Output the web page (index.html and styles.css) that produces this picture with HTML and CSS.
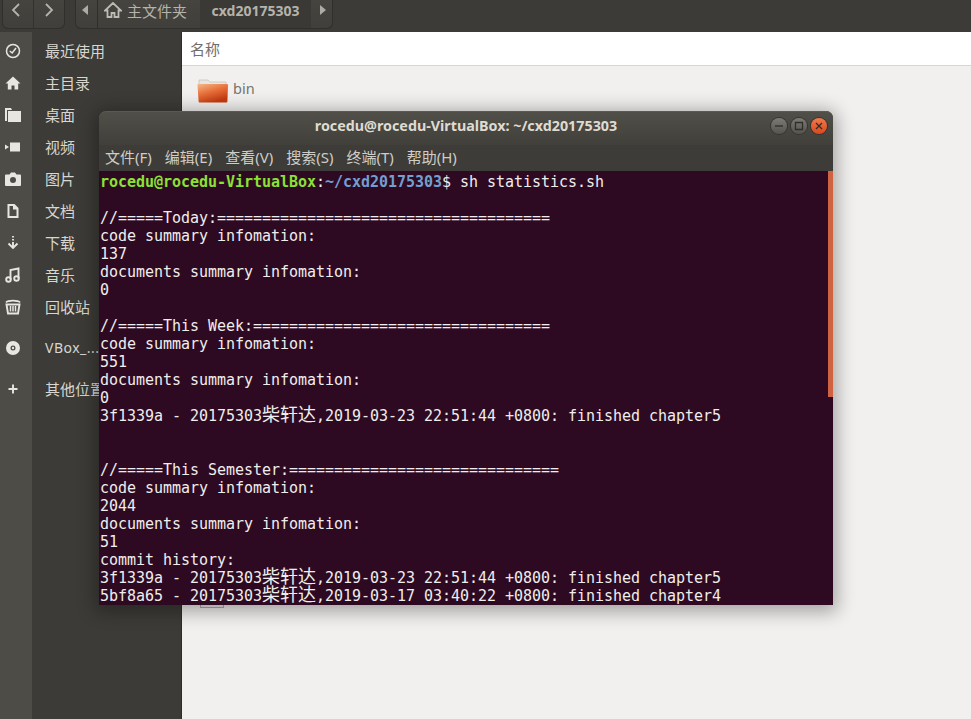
FILE: index.html
```html
<!DOCTYPE html>
<html lang="zh">
<head>
<meta charset="utf-8">
<title>cxd20175303</title>
<link rel="stylesheet" href="styles.css">
</head>
<body>
<div class="desktop">
  <header class="toolbar">
    <div class="btn-group nav">
      <div class="nav-btn"><svg width="12" height="16" viewBox="0 0 12 16"><path d="M9 2 3 8l6 6" class="chev"/></svg></div>
      <div class="nav-btn last"><svg width="12" height="16" viewBox="0 0 12 16"><path d="m3 2 6 6-6 6" class="chev"/></svg></div>
    </div>
    <div class="btn-group path">
      <div class="arrow-cell first"><svg width="8" height="12" viewBox="0 0 8 12"><path d="M7 1v10L1 6z" class="tri"/></svg></div>
      <div class="crumb home">
        <svg width="18" height="16" viewBox="0 0 18 16"><path d="M9 1 1 8.500h2.500V15h4v-4h3v4h4V8.500H17z" class="home-line"/></svg>
        <span>主文件夹</span>
      </div>
      <div class="crumb current">cxd20175303</div>
      <div class="arrow-cell end"><svg width="8" height="12" viewBox="0 0 8 12"><path d="M1 1v10l6-5z" class="tri"/></svg></div>
    </div>
    <div class="toolbar-fill"></div>
  </header>

  <div class="body-row">
    <nav class="places">
      <div class="place"><span class="rail"><svg width="16" height="16" viewBox="0 0 16 16"><circle cx="8" cy="8" r="6.500" class="stroke"/><path d="m4.800 8 2.400 2 3.800-5" class="stroke"/></svg></span><span class="label">最近使用</span></div>
      <div class="place"><span class="rail"><svg width="16" height="16" viewBox="0 0 16 16"><path d="M8 1.500 .5 8.500h2.300V14.500h3.700v-4h3v4h3.700V8.500h2.300z" class="fill"/></svg></span><span class="label">主目录</span></div>
      <div class="place"><span class="rail"><svg width="16" height="16" viewBox="0 0 16 16"><path d="M0 1h6l1 2h-5v11H0z" class="fill"/><path d="M3 4h13v11H3z" class="fill"/></svg></span><span class="label">桌面</span></div>
      <div class="place"><span class="rail"><svg width="16" height="16" viewBox="0 0 16 16"><path d="M5 3.500h10v9H5z" class="fill"/><path d="M0 5.500 4 8 0 10.500z" class="fill"/></svg></span><span class="label">视频</span></div>
      <div class="place"><span class="rail"><svg width="16" height="16" viewBox="0 0 16 16"><path fill-rule="evenodd" d="M1 3.500h3.500L6 1.500h4l1.500 2H15a1 1 0 0 1 1 1V14a1 1 0 0 1-1 1H1a1 1 0 0 1-1-1V4.500a1 1 0 0 1 1-1ZM8 6a3 3 0 1 0 0 6 3 3 0 0 0 0-6Z" class="fill"/></svg></span><span class="label">图片</span></div>
      <div class="place"><span class="rail"><svg width="16" height="16" viewBox="0 0 16 16"><path fill-rule="evenodd" d="M2.500 1h7l4 4v10h-11Zm2 2v10h7V6.500h-3.500V3Z" class="fill"/></svg></span><span class="label">文档</span></div>
      <div class="place"><span class="rail"><svg width="16" height="16" viewBox="0 0 16 16"><path d="M8 1v1.500M8 4v1.500M8 7v5M3.500 8.500 8 13l4.500-4.500" class="stroke thick"/></svg></span><span class="label">下载</span></div>
      <div class="place"><span class="rail"><svg width="16" height="16" viewBox="0 0 16 16"><path d="M5.500 12.500V3l8-1.500v10" class="stroke thick"/><circle cx="3.500" cy="12.500" r="2.300" class="stroke thick"/><circle cx="11.500" cy="11.500" r="2.300" class="stroke thick"/></svg></span><span class="label">音乐</span></div>
      <div class="place"><span class="rail"><svg width="16" height="16" viewBox="0 0 16 16"><path d="M1 3.500C3 1 13 1 15 3.500" class="stroke thick"/><path d="M1.500 5.500h13L13 14.500H3z" class="stroke thick"/><path d="M5.500 7v5.500M8 7v5.500M10.500 7v5.500" class="stroke"/></svg></span><span class="label">回收站</span></div>
      <div class="place device"><span class="rail"><svg width="16" height="16" viewBox="0 0 16 16"><path fill-rule="evenodd" d="M8 1a7 7 0 1 0 0 14A7 7 0 0 0 8 1Zm0 4.500a2.500 2.500 0 1 1 0 5 2.500 2.500 0 0 1 0-5Z" class="fill"/><circle cx="8" cy="8" r="1.200" class="fill"/></svg></span><span class="label latin">VBox_...</span></div>
      <div class="place other"><span class="rail"><svg width="16" height="16" viewBox="0 0 16 16"><path d="M8 3.500v9M3.500 8h9" class="stroke thick"/></svg></span><span class="label">其他位置</span></div>
      <div class="rail-fill"></div>
    </nav>

    <main class="files">
      <div class="col-header">名称</div>
      <div class="file-row">
        <svg width="32" height="26" viewBox="0 0 32 26">
          <defs>
            <linearGradient id="fold" x1="0" y1="0" x2="0.500" y2="1"><stop offset="0" stop-color="#f3b98a"/><stop offset=".5" stop-color="#e8703a"/><stop offset="1" stop-color="#c43a10"/></linearGradient>
          </defs>
          <path d="M2 2h9l2 2h16v4H2z" fill="#e9e6e2" stroke="#bdb7b0" stroke-width=".6"/>
          <path d="M1 6h29a1 1 0 0 1 1 1l-.6 16.500a1 1 0 0 1-1 1H2.600a1 1 0 0 1-1-1L.5 7a1 1 0 0 1 .5-1Z" fill="url(#fold)"/>
        </svg>
        <span class="file-name">bin</span>
      </div>
      <div class="hidden-file"></div>
    </main>
  </div>

  <section class="terminal">
    <div class="term-title">
      <span class="term-name">rocedu@rocedu-VirtualBox: ~/cxd20175303</span>
      <div class="win-btns">
        <span class="win-btn"><svg width="10" height="10" viewBox="0 0 10 10"><path d="M1 5h8" class="glyph"/></svg></span>
        <span class="win-btn"><svg width="10" height="10" viewBox="0 0 10 10"><path d="M1.500 1.500h7v7h-7z" class="glyph"/></svg></span>
        <span class="win-btn close"><svg width="10" height="10" viewBox="0 0 10 10"><path d="m2 2 6 6M8 2 2 8" class="glyph dark"/></svg></span>
      </div>
    </div>
    <div class="term-menu">
      <span>文件(F)</span><span>编辑(E)</span><span>查看(V)</span><span>搜索(S)</span><span>终端(T)</span><span>帮助(H)</span>
    </div>
    <div class="term-body">
      <pre class="term-text"><b class="user">rocedu@rocedu-VirtualBox</b>:<b class="cwd">~/cxd20175303</b>$ sh statistics.sh

//=====Today:=====================================
code summary infomation:
137
documents summary infomation:
0

//=====This Week:=================================
code summary infomation:
551
documents summary infomation:
0
3f1339a - 20175303<span class="cjk">柴轩达</span>,2019-03-23 22:51:44 +0800: finished chapter5


//=====This Semester:==============================
code summary infomation:
2044
documents summary infomation:
51
commit history:
3f1339a - 20175303<span class="cjk">柴轩达</span>,2019-03-23 22:51:44 +0800: finished chapter5
5bf8a65 - 20175303<span class="cjk">柴轩达</span>,2019-03-17 03:40:22 +0800: finished chapter4</pre>
      <div class="scroll-thumb"></div>
    </div>
  </section>
</div>
</body>
</html>
```

FILE: styles.css
```css
* { box-sizing: border-box; }
html, body { margin: 0; padding: 0; }
body { width: 971px; height: 719px; overflow: hidden; background: #f1f0ee; }
.desktop {
  position: relative;
  width: 971px;
  height: 719px;
  display: flex;
  flex-direction: column;
  font-family: "Noto Sans", "Noto Sans CJK SC", sans-serif;
  overflow: hidden;
}

/* toolbar */
.toolbar {
  height: 32px;
  flex: none;
  display: flex;
  gap: 10px;
  padding-left: 2px;
  background: #3c3b37;
  align-items: flex-start;
}
.btn-group {
  height: 29px;
  display: flex;
  border: 1px solid #302f2c;
  border-top: 0;
  border-radius: 0 0 6px 6px;
  background: linear-gradient(#45443f, #413f3b);
  overflow: hidden;
}
.nav { width: 63px; }
.nav-btn { width: 31px; display: flex; align-items: center; justify-content: center; padding: 0 3px 9px 0; border-right: 1px solid #33322f; }
.nav-btn.last { border-right: 0; padding-right: 0; }
.chev { fill: none; stroke: #b5b3ab; stroke-width: 1.800; }
.path { width: 258px; }
.arrow-cell { display: flex; align-items: center; justify-content: center; padding-bottom: 9px; }
.arrow-cell.first { width: 22px; padding-right: 4px; border-right: 1px solid #2f2e2b; }
.arrow-cell.end { flex: 1; padding-left: 2px; }
.tri { fill: #aeaca4; }
.crumb { display: flex; align-items: center; padding-bottom: 8px; font-size: 15px; color: #b5b3ab; }
.crumb.home { width: 102px; gap: 5px; padding-left: 6px; }
.home-line { fill: none; stroke: #bdbbb3; stroke-width: 1.800; }
.crumb.current { width: 111px; justify-content: center; font-weight: 700; font-size: 14px; background: #3a3935; color: #b5b3ab; }
.toolbar-fill { flex: 1; }

/* body */
.body-row { flex: 1; display: flex; min-height: 0; }
.places {
  width: 182px;
  flex: none;
  padding-top: 4px;
  display: flex;
  flex-direction: column;
  background: linear-gradient(to right, #4d4c47 0, #4d4c47 32px, #3c3b37 32px, #3c3b37 181px, #2e2d2a 181px);
}
.place { height: 32px; flex: none; display: flex; align-items: center; color: #d8d6cf; margin-top: -2px; margin-bottom: 2px; }
.rail { width: 32px; flex: none; display: flex; align-items: center; justify-content: center; padding: 2px 6px 0 0; }
.label { margin-left: 13px; font-size: 15px; white-space: nowrap; }
.label.latin { font-size: 14px; letter-spacing: .5px; }
.place.device { margin-top: 7px; }
.place.other { margin-top: 7px; }
.rail-fill { flex: 1; }
.fill { fill: #e8e6e0; }
.stroke { fill: none; stroke: #e8e6e0; stroke-width: 1.500; }
.stroke.thick { stroke-width: 1.900; }

/* files */
.files { flex: 1; display: flex; flex-direction: column; background: #f1f0ee; position: relative; }
.col-header {
  height: 34px;
  flex: none;
  padding: 6px 0 0 8px;
  font-size: 15px;
  color: #6f6e6a;
  background: #fff;
  border-bottom: 1px solid #d8d6d2;
}
.file-row { display: flex; align-items: center; gap: 4px; padding: 12px 0 0 15px; }
.file-name { font-size: 14.500px; color: #75746f; padding-bottom: 6px; }
.hidden-file {
  position: absolute;
  left: 18px;
  top: 566px;
  width: 24px;
  height: 10px;
  background: #ecebe9;
  border: 1px solid #aeaca8;
}

/* terminal */
.terminal {
  position: absolute;
  left: 99px;
  top: 111px;
  width: 734px;
  height: 494px;
  display: flex;
  flex-direction: column;
  border-radius: 7px 7px 0 0;
  box-shadow: 0 3px 18px 4px rgba(0, 0, 0, .32);
  background: #3d3c38;
}
.term-title {
  height: 34px;
  flex: none;
  position: relative;
  display: flex;
  align-items: center;
  justify-content: center;
  padding-bottom: 6px;
  border-radius: 7px 7px 0 0;
  background: linear-gradient(#514f48, #403f3a);
  border-top: 1px solid #5b5952;
}
.term-name { font-size: 14.300px; font-weight: 700; color: #dfdbd2; font-family: "Noto Sans", sans-serif; }
.win-btns { position: absolute; right: 6px; top: 6px; display: flex; gap: 4px; }
.win-btn {
  width: 16px;
  height: 16px;
  border-radius: 50%;
  display: flex;
  align-items: center;
  justify-content: center;
  background: linear-gradient(#7d7b74, #55534d);
  box-shadow: 0 0 0 1px #35342f;
}
.win-btn.close { background: linear-gradient(#f3794a, #d9481c); }
.glyph { fill: none; stroke: #2f2e2a; stroke-width: 1.300; }
.term-menu {
  height: 26px;
  flex: none;
  display: flex;
  gap: 13px;
  padding: 0 0 4px 6px;
  align-items: center;
  font-size: 15px;
  color: #cfcdc5;
  background: #3d3c38;
}
.term-body {
  flex: 1;
  min-height: 0;
  position: relative;
  background: #2e0a22;
  padding: 2px 0 0 1px;
  overflow: hidden;
}
.term-text {
  margin: 0;
  font-family: "DejaVu Sans Mono", "Noto Sans CJK SC", monospace;
  font-size: 15px;
  line-height: 18px;
  letter-spacing: -.03px;
  color: #eeeeec;
}
.term-text b { font-weight: 700; }
.user { color: #8ae234; }
.cwd { color: #729fcf; }
.cjk { font-family: "Noto Sans CJK SC", sans-serif; font-size: 18px; line-height: 0; letter-spacing: 0; }
.scroll-thumb {
  position: absolute;
  right: 0;
  top: 0;
  width: 5px;
  height: 226px;
  background: #cf6240;
}
```
